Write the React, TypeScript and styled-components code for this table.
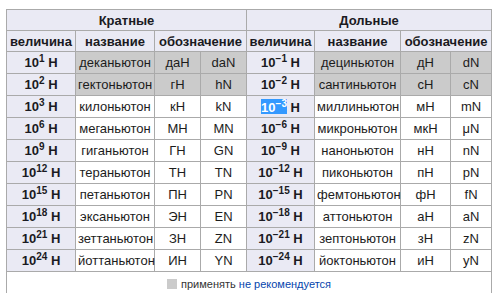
import * as React from "react";
import styled, { createGlobalStyle } from "styled-components";

const GlobalStyle = createGlobalStyle`
  body {
    margin: 0;
    background: #fff;
    font-family: "Liberation Sans", Arial, sans-serif;
  }
`;

const Page = styled.div`
  padding: 9px 0 0 6px;
`;

const Table = styled.table`
  border-collapse: collapse;
  table-layout: fixed;
  width: 486px;
  font-size: 13px;
  color: #111;
  text-align: center;
`;

const HeadRow = styled.tr`
  height: 21px;
`;

const DataRow = styled.tr`
  height: 22px;
`;

const Th = styled.th`
  background: #eaeaf4;
  border: 1px solid #aaa;
  padding: 0 2px;
  font-weight: bold;
  color: #1a1a22;
  white-space: nowrap;
`;

const Td = styled.td<{ $muted?: boolean }>`
  background: ${(p) => (p.$muted ? "#cbcbcb" : "#fff")};
  border: 1px solid #aaa;
  padding: 0 2px;
  white-space: nowrap;
  color: #1c1c1c;
`;

const Sup = styled.sup`
  font-size: 10px;
  line-height: 0;
  vertical-align: 5px;
`;

const Selected = styled.span`
  display: inline-block;
  padding-top: 3px;
  line-height: 12px;
  background: #3399ff;
  color: #fff;
`;

const FootCell = styled.td`
  border: 1px solid #aaa;
  border-bottom: none;
  height: 24px;
  padding: 0;
  font-size: 11px;
  color: #333;
`;

const Legend = styled.div`
  display: flex;
  align-items: center;
  justify-content: center;
  gap: 4px;
`;

const Swatch = styled.span`
  display: inline-block;
  width: 10px;
  height: 10px;
  background: #cbcbcb;
`;

const Link = styled.span`
  color: #0645ad;
`;

type Unit = {
  exp: string;
  name: string;
  ru: string;
  en: string;
  muted?: boolean;
};

const multiples: Unit[] = [
  { exp: "1", name: "деканьютон", ru: "даН", en: "daN", muted: true },
  { exp: "2", name: "гектоньютон", ru: "гН", en: "hN", muted: true },
  { exp: "3", name: "килоньютон", ru: "кН", en: "kN" },
  { exp: "6", name: "меганьютон", ru: "МН", en: "MN" },
  { exp: "9", name: "гиганьютон", ru: "ГН", en: "GN" },
  { exp: "12", name: "тераньютон", ru: "ТН", en: "TN" },
  { exp: "15", name: "петаньютон", ru: "ПН", en: "PN" },
  { exp: "18", name: "эксаньютон", ru: "ЭН", en: "EN" },
  { exp: "21", name: "зеттаньютон", ru: "ЗН", en: "ZN" },
  { exp: "24", name: "йоттаньютон", ru: "ИН", en: "YN" },
];

const submultiples: Unit[] = [
  { exp: "−1", name: "дециньютон", ru: "дН", en: "dN", muted: true },
  { exp: "−2", name: "сантиньютон", ru: "сН", en: "cN", muted: true },
  { exp: "−3", name: "миллиньютон", ru: "мН", en: "mN" },
  { exp: "−6", name: "микроньютон", ru: "мкН", en: "μN" },
  { exp: "−9", name: "наноньютон", ru: "нН", en: "nN" },
  { exp: "−12", name: "пиконьютон", ru: "пН", en: "pN" },
  { exp: "−15", name: "фемтоньютон", ru: "фН", en: "fN" },
  { exp: "−18", name: "аттоньютон", ru: "аН", en: "aN" },
  { exp: "−21", name: "зептоньютон", ru: "зН", en: "zN" },
  { exp: "−24", name: "йоктоньютон", ru: "иН", en: "yN" },
];

function Power({ exp, selected }: { exp: string; selected?: boolean }) {
  const value = (
    <>
      10<Sup>{exp}</Sup>
    </>
  );
  return (
    <Th>
      {selected ? <Selected>{value}</Selected> : value} Н
    </Th>
  );
}

function UnitCells({ unit, selected }: { unit: Unit; selected?: boolean }) {
  return (
    <>
      <Power exp={unit.exp} selected={selected} />
      <Td $muted={unit.muted}>{unit.name}</Td>
      <Td $muted={unit.muted}>{unit.ru}</Td>
      <Td $muted={unit.muted}>{unit.en}</Td>
    </>
  );
}

export default function App() {
  return (
    <>
      <GlobalStyle />
      <Page>
        <Table>
          <colgroup>
            <col style={{ width: 69 }} />
            <col style={{ width: 79 }} />
            <col style={{ width: 46 }} />
            <col style={{ width: 46 }} />
            <col style={{ width: 68 }} />
            <col style={{ width: 86 }} />
            <col style={{ width: 50 }} />
            <col style={{ width: 41 }} />
          </colgroup>
          <thead>
            <HeadRow>
              <Th colSpan={4}>Кратные</Th>
              <Th colSpan={4}>Дольные</Th>
            </HeadRow>
            <HeadRow>
              <Th>величина</Th>
              <Th>название</Th>
              <Th colSpan={2}>обозначение</Th>
              <Th>величина</Th>
              <Th>название</Th>
              <Th colSpan={2}>обозначение</Th>
            </HeadRow>
          </thead>
          <tbody>
            {multiples.map((m, i) => (
              <DataRow key={m.exp}>
                <UnitCells unit={m} />
                <UnitCells unit={submultiples[i]} selected={i === 2} />
              </DataRow>
            ))}
            <tr>
              <FootCell colSpan={8}>
                <Legend>
                  <Swatch />
                  <span>
                    применять <Link>не рекомендуется</Link>
                  </span>
                </Legend>
              </FootCell>
            </tr>
          </tbody>
        </Table>
      </Page>
    </>
  );
}
